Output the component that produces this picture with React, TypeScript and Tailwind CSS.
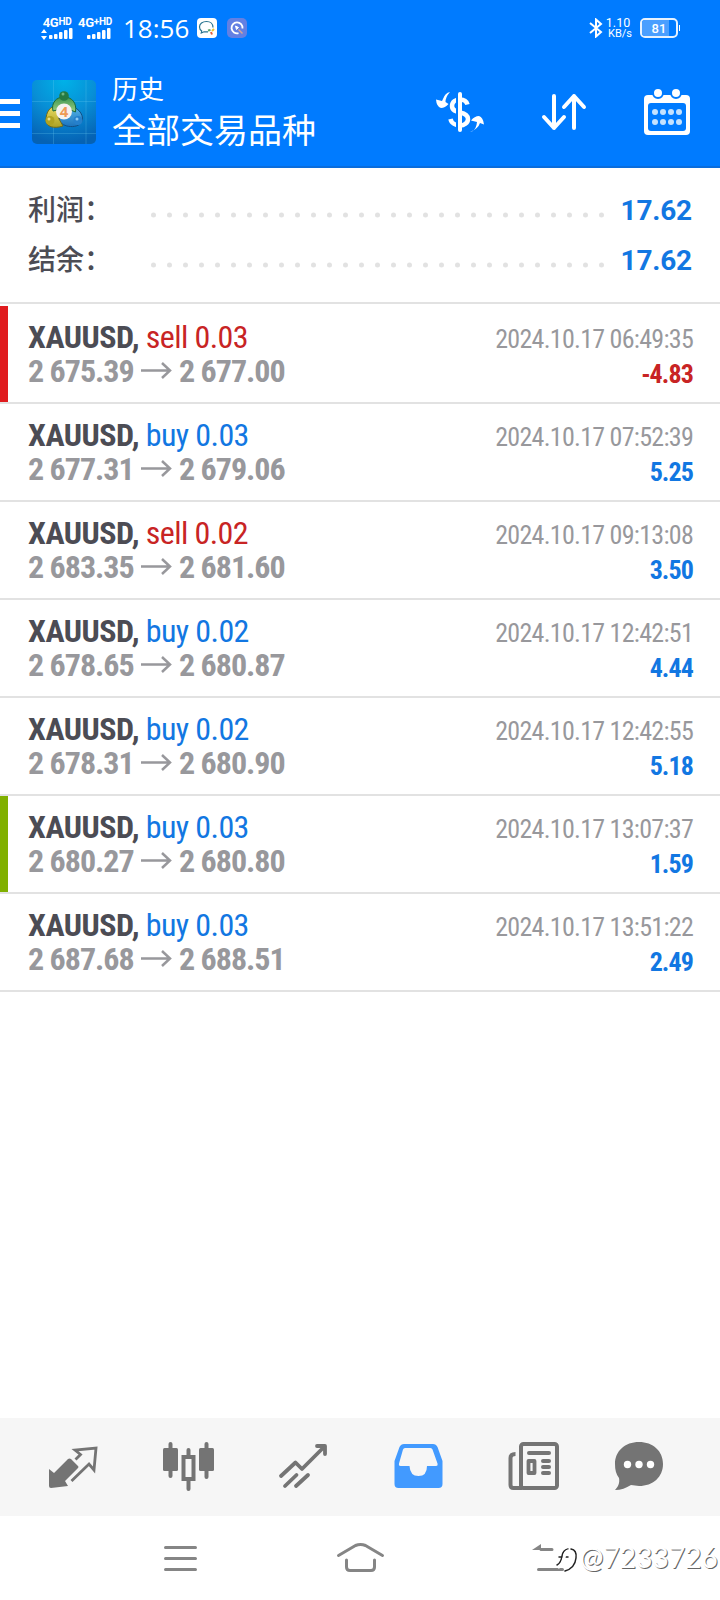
import type { ReactNode } from "react";

type Deal = {
  side: "buy" | "sell";
  volume: string;
  open: string;
  close: string;
  time: string;
  profit: string;
  marker?: string;
};

const deals: Deal[] = [
  { side: "sell", volume: "0.03", open: "2 675.39", close: "2 677.00", time: "2024.10.17 06:49:35", profit: "-4.83", marker: "bg-[#e01b1e]" },
  { side: "buy", volume: "0.03", open: "2 677.31", close: "2 679.06", time: "2024.10.17 07:52:39", profit: "5.25" },
  { side: "sell", volume: "0.02", open: "2 683.35", close: "2 681.60", time: "2024.10.17 09:13:08", profit: "3.50" },
  { side: "buy", volume: "0.02", open: "2 678.65", close: "2 680.87", time: "2024.10.17 12:42:51", profit: "4.44" },
  { side: "buy", volume: "0.02", open: "2 678.31", close: "2 680.90", time: "2024.10.17 12:42:55", profit: "5.18" },
  { side: "buy", volume: "0.03", open: "2 680.27", close: "2 680.80", time: "2024.10.17 13:07:37", profit: "1.59", marker: "bg-[#80b000]" },
  { side: "buy", volume: "0.03", open: "2 687.68", close: "2 688.51", time: "2024.10.17 13:51:22", profit: "2.49" },
];

function Signal({ label, arrows }: { label: ReactNode; arrows?: boolean }) {
  return (
    <div className="flex w-[38px] flex-col items-center">
      <div className="flex h-[11px] items-start font-['Roboto',sans-serif] text-[13px] leading-[11px] font-bold tracking-[-0.3px] whitespace-nowrap">
        {label}
      </div>
      <svg width="34" height="12" viewBox="0 0 34 12" fill="#fff">
        {arrows && <path d="M1 5l3-4 3 4zM1 8h6l-3 4z" />}
        {arrows && <rect x="9" y="7" width="3.5" height="4" rx="1" />}
        <rect x="14" y="6" width="3.5" height="5" rx="1" />
        <rect x="19" y="4" width="3.5" height="7" rx="1" />
        <rect x="24" y="2" width="3.5" height="9" rx="1" />
        <rect x="29" y="0" width="3.5" height="11" rx="1" />
        {!arrows && <rect x="9" y="7" width="3.5" height="4" rx="1" />}
      </svg>
    </div>
  );
}

function StatusBar() {
  return (
    <div className="flex h-14 items-center pr-[42px] pl-[38px] text-white">
      <Signal arrows label={<>4G<span className="text-[10px] leading-[9px]">HD</span></>} />
      <Signal label={<>4G<span className="text-[10px] leading-[9px]">+HD</span></>} />
      <span className="ml-[9px] w-[65px] font-['Open_Sans',sans-serif] text-[26px] font-medium">18:56</span>
      <svg className="ml-[9px]" width="20" height="20" viewBox="0 0 20 20">
        <rect width="20" height="20" rx="4" fill="#fff" />
        <path d="M9.500 3.500c-4 0-7 2.300-7 5.500 0 1.600.8 3 2.200 3.900L4.300 15l2.700-1.200h4M16 9.500c0-3.500-2.500-6-6.500-6" fill="none" stroke="#287490" strokeWidth="1.200" />
        <path d="M11 12.500l2.500-.5" stroke="#5aa469" strokeWidth="2" />
        <path d="M17 11l-2 2" stroke="#e8c335" strokeWidth="2" />
        <path d="M14 14l1 2.500" stroke="#e0603f" strokeWidth="2" />
      </svg>
      <svg className="ml-[10px]" width="20" height="20" viewBox="0 0 20 20">
        <rect width="20" height="20" rx="5" fill="#6380e3" />
        <path d="M11.500 15.200A5.500 5.500 0 1 1 15.500 10.500" fill="none" stroke="#fff" strokeWidth="1.800" />
        <path d="M8.500 8l1 3.500 2-2z" fill="#fff" stroke="#fff" />
        <path d="M11.500 11.500l4 4" stroke="#d7a596" strokeWidth="1.500" />
      </svg>
      <div className="flex-1" />
      <svg width="14" height="20" viewBox="0 0 14 20" fill="none" stroke="#fff" strokeWidth="2">
        <path d="M1 5l11 9-5 4.500v-17L12 6 1 15" />
      </svg>
      <div className="ml-1 flex w-[26px] flex-col items-center font-['Roboto',sans-serif] text-[12.5px] leading-[11px]">
        <span className="-ml-1">1.10</span>
        <span className="text-[11px] leading-[11px]">KB/s</span>
      </div>
      <div className="relative ml-[7px] flex h-5 w-[38px] items-center justify-center rounded-[5px] border-2 border-white/90">
        <span className="absolute top-0 left-0 h-4 w-[27px] rounded-l-[3px] bg-[#4a9fff]" />
        <span className="relative font-['Roboto',sans-serif] text-[13px] leading-none font-medium">81</span>
        <span className="absolute top-[5px] -right-[4px] h-1.5 w-px bg-white" />
      </div>
    </div>
  );
}

function AppLogo() {
  return (
    <svg className="ml-3" width="64" height="64" viewBox="0 0 64 64">
      <defs>
        <radialGradient id="tile" cx="0.5" cy="0" r="1">
          <stop offset="0" stopColor="#00b2e8" />
          <stop offset="0.5" stopColor="#088fd6" />
          <stop offset="1" stopColor="#0562b4" />
        </radialGradient>
        <linearGradient id="green" x2="0" y2="1">
          <stop stopColor="#3c9451" />
          <stop offset="1" stopColor="#9bd080" />
        </linearGradient>
        <linearGradient id="yellow" x2="0" y2="1">
          <stop stopColor="#e9dc62" />
          <stop offset="1" stopColor="#aca123" />
        </linearGradient>
        <linearGradient id="sky" x2="0" y2="1">
          <stop stopColor="#57b8eb" />
          <stop offset="1" stopColor="#1c73bd" />
        </linearGradient>
      </defs>
      <rect width="64" height="64" rx="5" fill="url(#tile)" />
      <path d="M21.500 0v64M54 0v64M0 21.500h64M0 53.500h64" stroke="#6fd0f4" strokeOpacity="0.250" />
      <path d="M34 26c8-1 16 5 16.500 12 0 7-7 9-12 8.500-5 0-10-3-12-6z" fill="url(#sky)" stroke="#124f86" />
      <path d="M25 26c-7 0-11 6-11 14 0 7 8 9 17 6l-4-7z" fill="url(#yellow)" stroke="#6e6a1c" />
      <path d="M21 31c-2-8 3-14 11-14s13 6 11.500 15l-5-2-6.500-5-7 5z" fill="url(#green)" stroke="#17683a" />
      <circle cx="32" cy="16" r="4.800" fill="#257a43" />
      <circle cx="31" cy="14" r="1.500" fill="#6fb582" />
      <circle cx="18" cy="40.500" r="4.500" fill="#b0a321" />
      <circle cx="17" cy="39" r="1.500" fill="#e8e08a" />
      <circle cx="46" cy="40.500" r="4.500" fill="#2580cc" />
      <circle cx="45" cy="39" r="1.500" fill="#8cc8f2" />
      <circle cx="32" cy="31.500" r="8" fill="#f5f2ef" />
      <text x="32" y="37" textAnchor="middle" fontFamily="Open Sans" fontSize="15" fontWeight="700" fill="#ee9a55">4</text>
    </svg>
  );
}

function Header() {
  return (
    <header className="h-[168px] border-b-2 border-[#0a6ddc] bg-[#007bff] font-['Noto_Sans_CJK_SC',sans-serif] text-white">
      <StatusBar />
      <div className="flex h-[112px] items-center">
        <div className="mt-[3px] flex w-5 flex-col gap-[7px]">
          <span className="h-[5px] bg-white" />
          <span className="h-[5px] bg-white" />
          <span className="h-[5px] bg-white" />
        </div>
        <AppLogo />
        <div className="-mt-1 ml-4 flex flex-col">
          <span className="text-[26px] leading-[38px]">历史</span>
          <span className="text-[34px] leading-[44px]">全部交易品种</span>
        </div>
        <div className="flex-1" />
        <svg width="50" height="44" viewBox="435 90 50 44" fill="#fff">
          <path d="M450 92q-5 1-7 7l-1 2-6-1.500q.500 7 5 8.500 4 0 7.500-4l-3-2q0-5 4.500-10z" />
          <path d="M470 132q5-1 6.500-7l.5-3-6-1.500q3.500-4.500 8-4.500 4 1 5 8.500l-4-1.500q-2 6-10 9z" />
          <path d="M467.500 104.500c-1-3.500-3.500-5-7.500-5s-8 2-8 6.500c0 4.500 4 5.500 8 6.500 5 1 8 2.500 8 6.500s-4 6.500-8 6.500-8.500-2-9.500-6.500" fill="none" stroke="#fff" strokeWidth="4.500" />
          <path d="M457.500 94v36" stroke="#007bff" strokeWidth="3" />
          <path d="M460 94v36" stroke="#fff" strokeWidth="4" strokeLinecap="round" />
        </svg>
        <svg className="ml-[56px]" width="46" height="40" viewBox="541 92 46 40" fill="none" stroke="#fff" strokeWidth="4" strokeLinecap="round" strokeLinejoin="round">
          <path d="M554 96v32M544 117l10 11 10-11M574 128V96M564 107l10-11 10 11" />
        </svg>
        <svg className="mr-[29px] ml-[56px]" width="48" height="48" viewBox="643 87 48 48">
          <rect x="644" y="94" width="46" height="40" rx="4" fill="#fff" />
          <rect x="648" y="102" width="38" height="28" rx="3" fill="#007bff" />
          <g fill="#fff" stroke="#007bff" strokeWidth="2">
            <circle cx="658" cy="92" r="5" />
            <circle cx="676" cy="92" r="5" />
          </g>
          <g fill="#c4e2ff">
            {[655, 663, 671, 679].map((x) => (
              <g key={x}>
                <circle cx={x} cy="111" r="3" />
                <circle cx={x} cy="121" r="3" />
              </g>
            ))}
          </g>
        </svg>
      </div>
    </header>
  );
}

function SummaryRow({ label, value }: { label: string; value: string }) {
  return (
    <div className="flex h-[50px] items-center pr-[28px] pl-[28px]">
      <span className="-mt-0.5 w-[121px] font-['Noto_Sans_CJK_SC',sans-serif] text-[28px] font-medium text-[#4c4c54]">{label}</span>
      <svg className="mt-[11px]" width="456" height="6" viewBox="0 0 456 6">
        <path d="M4.500 3H453" stroke="#e2e2e2" strokeWidth="5" strokeLinecap="round" strokeDasharray="0 16" />
      </svg>
      <span className="mt-[3px] flex-1 text-right font-['Roboto',sans-serif] text-[28px] font-bold tracking-[-0.2px] text-[#1277e2]">{value}</span>
    </div>
  );
}

function DealRow({ deal }: { deal: Deal }) {
  const sideColor = deal.side === "buy" ? "text-[#1277e2]" : "text-[#c82424]";
  const profitColor = deal.profit.startsWith("-") ? "text-[#c82424]" : "text-[#1277e2]";
  return (
    <div className="flex h-[98px] border-b-2 border-[#e2e2e2] pr-[28px] font-['Roboto_Condensed','Roboto',sans-serif] font-stretch-condensed">
      <div className={`w-2 ${deal.marker ?? ""}`} />
      <div className="ml-5 flex flex-1 flex-col pt-[14px] text-[32px] leading-[34px] whitespace-nowrap">
        <div className="tracking-[-0.6px]">
          <span className="font-bold tracking-[-0.5px] text-[#4c4c54]">XAUUSD,</span>{" "}
          <span className={sideColor}>{deal.side} {deal.volume}</span>
        </div>
        <div className="flex items-center font-bold tracking-[-1px] text-[#98989c]">
          <span className="w-[105px]">{deal.open}</span>
          <svg className="mr-[6px] ml-[7px]" width="33" height="20" viewBox="0 0 33 20" fill="none" stroke="#98989c" strokeWidth="2.500">
            <path d="M1 9.500h29M22 2l8 7.500-8 7.500" />
          </svg>
          {deal.close}
        </div>
      </div>
      <div className="flex flex-col items-end pt-4 text-[26px] leading-[34px] whitespace-nowrap">
        <span className="-mr-px tracking-[-0.72px] text-[#98989c]">{deal.time}</span>
        <span className={`-mr-px pt-px text-[26px] leading-[34px] font-bold tracking-[-0.9px] ${profitColor}`}>{deal.profit}</span>
      </div>
    </div>
  );
}

function TabBar() {
  return (
    <nav className="h-[98px] bg-[#f6f6f6]">
      <svg width="720" height="98" viewBox="0 1418 720 98" fill="#747474">
        <path d="M49 1469l5 4 14-14q1.500-1 3 0l7 7q1 1 0 2l-13 13 3 5-17 2q-2 0-2-2z" />
        <path d="M75.500 1459.500l5-5-5.500-4.500 21-2-2 22-5-6-17.500 17" fill="none" stroke="#747474" strokeWidth="2.800" />
        <rect x="163" y="1448" width="15" height="23" rx="1.500" />
        <rect x="199" y="1448" width="15" height="23" rx="1.500" />
        <path d="M170.500 1444v32M206.500 1444v33M188.500 1450v6M188.500 1480v9" stroke="#747474" strokeWidth="4" strokeLinecap="round" />
        <rect x="183.500" y="1457" width="10" height="22" fill="none" stroke="#747474" strokeWidth="4" />
        <g fill="none" stroke="#747474" strokeWidth="3.800" strokeLinecap="round" strokeLinejoin="round">
          <path d="M281 1476l14.500-13.500 6.500 6.500 22-22M317 1446h8v8M285 1486l11.500-11M296 1486l12-11" />
        </g>
        <path fillRule="evenodd" fill="#429aff" d="M404 1444h29q3 0 4.500 3l5 14v23q0 4-4 4h-40q-4 0-4-4v-23l5-14q1.500-3 4.500-3zM405 1448q-1.500 0-2 1.500l-4 14q-.5 2.500 1.500 2.500h9q.5 10 9 10t8.500-10h9q2 0 1.500-2.500l-5-14q-.5-1.500-2-1.500z" />
        <g fill="none" stroke="#747474" strokeWidth="4">
          <rect x="521" y="1444" width="36" height="44" rx="2.500" />
          <path d="M515.500 1454q-5 0-5 4v27q0 3 3 3h9" />
          <path d="M529 1453h20M543 1461h6M543 1467h6M543 1473h6" strokeLinecap="round" />
          <rect x="528.500" y="1461" width="6" height="12" strokeWidth="3.800" strokeLinejoin="round" />
        </g>
        <path d="M639 1442c14 0 24 9 24 22s-10 22-24 22l-8-1c-5 3-10 5-16 5 3-3 5-7 4-12-3-4-4-8-4-14 0-13 10-22 24-22z" />
        <g fill="#fff">
          <circle cx="627.500" cy="1464.500" r="3.700" />
          <circle cx="639" cy="1464.500" r="3.700" />
          <circle cx="650.500" cy="1464.500" r="3.700" />
        </g>
      </svg>
    </nav>
  );
}

function SystemNav() {
  return (
    <div className="relative h-[84px]">
      <svg width="720" height="84" viewBox="0 1516 720 84" fill="none" stroke="#858585" strokeWidth="3" strokeLinecap="round" strokeLinejoin="round">
        <path d="M165.500 1547.500h30M165.500 1558.500h30M165.500 1569.500h30" />
        <path d="M338.500 1555.500l17-10q5-2 10 0l17 10M346.500 1560v7q0 3.500 3.500 3.500h21q3.500 0 3.500-3.500v-7" />
        <path d="M541 1549.500h11M538.500 1569.500h24" />
        <path d="M532 1550l9-6v6z" fill="#858585" stroke="none" />
        <path d="M557 1565q4-2 5-9 1-6 6-7M559 1557h9" stroke="#222" strokeWidth="1.500" />
        <path d="M559 1567q4-2 5-9 1-6 4-7" stroke="#fff" />
        <path d="M571 1549q6 1 5 9-1 10-11 13" stroke="#222" strokeWidth="1.500" />
      </svg>
      <div className="absolute top-[22px] left-[580px] font-['Lato',sans-serif] text-[28px] leading-[38px] font-normal tracking-[0.1px] whitespace-nowrap text-white [text-shadow:1px_1px_0.5px_#666]">
        @7233726
      </div>
    </div>
  );
}

export default function App() {
  return (
    <div className="flex h-[1600px] w-[720px] flex-col overflow-hidden bg-white">
      <Header />
      <section className="h-[136px] border-b-2 border-[#e2e2e2] pt-4">
        <SummaryRow label="利润：" value="17.62" />
        <SummaryRow label="结余：" value="17.62" />
      </section>
      <main className="flex-1 pt-0.5">
        {deals.map((deal) => (
          <DealRow key={deal.time} deal={deal} />
        ))}
      </main>
      <TabBar />
      <SystemNav />
    </div>
  );
}
